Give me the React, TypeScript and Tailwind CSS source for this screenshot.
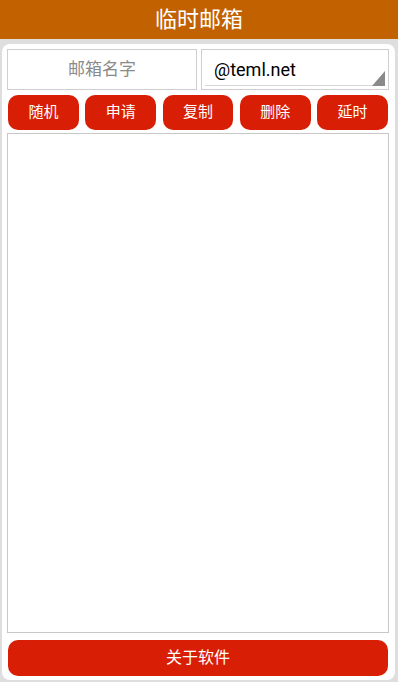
import React from "react";

const cjk = { fontFamily: 'Roboto, "Noto Sans CJK SC", sans-serif' };

export default function App() {
  const btns = ["随机", "申请", "复制", "删除", "延时"];
  return (
    <div className="w-[398px] h-[682px] bg-[#dedede] flex flex-col overflow-hidden" style={cjk}>
      <div className="h-[39px] bg-[#c26100] flex items-center justify-center text-white text-[22px] leading-none shrink-0">
        临时邮箱
      </div>
      <div className="mt-[5px] ml-[2px] mr-[3px] h-[636px] bg-white rounded-[8px] pl-[5px] pr-[6px] pt-[5px] pb-[4px] flex flex-col">
        <div className="flex gap-[4px] h-[41px]">
          <div className="w-[190px] h-full border border-[#cfcfcf] flex items-center justify-center text-[17px] text-[#8a8a8a]">
            邮箱名字
          </div>
          <div className="flex-1 h-full border border-[#cfcfcf] relative flex items-center pl-[12px] text-[18px] text-black">
            <span className="-mt-[1px]">@teml.net</span>
            <div className="absolute left-[3px] right-[3px] bottom-[3px] h-px bg-[#d8d8d8]" />
            <svg className="absolute right-[3px] bottom-[3px]" width="13" height="15" viewBox="0 0 13 15">
              <polygon points="13,0 13,15 0,15" fill="#8a8a8a" />
            </svg>
          </div>
        </div>
        <div className="mt-[5px] flex gap-[6.5px] px-[1px] h-[35px]">
          {btns.map((b) => (
            <div
              key={b}
              className="flex-1 h-full bg-[#d81f05] rounded-[10px] flex items-center justify-center text-white text-[15px]"
            >
              {b}
            </div>
          ))}
        </div>
        <div className="mt-[3px] h-[500px] border border-[#c8c8c8]" />
        <div className="mt-[7px] mx-[1px] h-[36px] bg-[#d81f05] rounded-[10px] flex items-center justify-center text-white text-[16px]">
          关于软件
        </div>
      </div>
    </div>
  );
}
